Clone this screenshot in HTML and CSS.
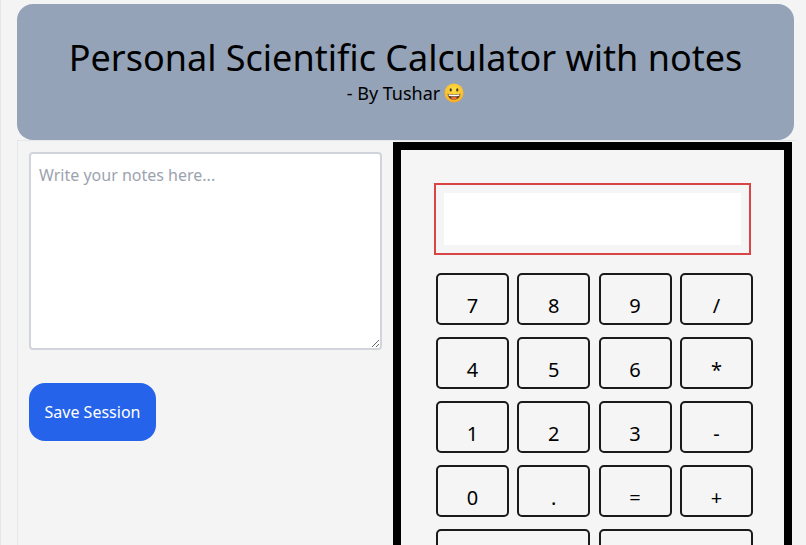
FILE: index.html
```html
<!DOCTYPE html>
<html lang="en">
<head>
<meta charset="utf-8">
<title>Personal Scientific Calculator with notes</title>
<link rel="stylesheet" href="styles.css">
</head>
<body>
<div class="page">
  <header class="banner">
    <h1 class="title">Personal Scientific Calculator with notes</h1>
    <p class="byline">- By Tushar <svg class="smiley" viewBox="0 0 22 22" aria-hidden="true"><defs><radialGradient id="f" cx="50%" cy="35%" r="65%"><stop offset="0" stop-color="#fde047"/><stop offset=".7" stop-color="#fbc02d"/><stop offset="1" stop-color="#f4a82a"/></radialGradient></defs><circle cx="11" cy="11" r="10.5" fill="url(#f)"/><ellipse cx="7.4" cy="7.6" rx="1.2" ry="1.8" fill="#40362a"/><ellipse cx="14.6" cy="7.6" rx="1.2" ry="1.8" fill="#40362a"/><path d="M4 11.8c4.500 1.200 9.500 1.200 14 0 0 3.800-3.100 6.400-7 6.400s-7-2.600-7-6.400z" fill="#5a3a22"/><path d="M5 12.300c4 .9 8 .9 12 0v1.600c-4 .8-8 .8-12 0z" fill="#fff"/><path d="M7.400 16.500c1-.9 2.200-1.300 3.600-1.300s2.600.4 3.600 1.300c-1 1-2.200 1.500-3.600 1.500s-2.600-.5-3.600-1.500z" fill="#ef6c3a"/></svg></p>
  </header>
  <main class="workspace">
    <section class="notes">
      <textarea class="notes-input" placeholder="Write your notes here..."></textarea>
      <button class="save">Save Session</button>
    </section>
    <section class="calc">
      <div class="display-frame"><div class="display"></div></div>
      <div class="keys">
        <button class="key">7</button><button class="key">8</button><button class="key">9</button><button class="key">/</button>
        <button class="key">4</button><button class="key">5</button><button class="key">6</button><button class="key">*</button>
        <button class="key">1</button><button class="key">2</button><button class="key">3</button><button class="key">-</button>
        <button class="key">0</button><button class="key">.</button><button class="key">=</button><button class="key">+</button>
        <button class="key wide"></button><button class="key wide"></button>
      </div>
    </section>
  </main>
</div>
</body>
</html>
```

FILE: styles.css
```css
* { box-sizing: border-box; }
html, body { margin: 0; height: 100%; overflow: hidden; }
body {
  background: #f4f4f5;
  font-family: "Noto Sans", sans-serif;
  color: #000;
}
.page {
  height: 100%;
  padding: 4px 12px 0 16px;
  border-left: 1px solid #e5e7eb;
}
.banner {
  height: 136px;
  background: #94a3b8;
  border-radius: 16px;
  padding-top: 32px;
  text-align: center;
}
.title {
  margin: 0;
  font-size: 36px;
  line-height: 44px;
  font-weight: 400;
}
.byline {
  margin: 1px 0 0;
  font-size: 18px;
  line-height: 24px;
  display: flex;
  justify-content: center;
  align-items: center;
  gap: 4px;
}
.smiley { width: 20px; height: 20px; }
.workspace {
  display: flex;
  height: 405px;
  margin-right: -2px;
  padding-top: 1px;
  border-left: 1px solid #e5e7eb;
  border-top: 1px solid #e5e7eb;
}
.notes {
  width: 375px;
  padding: 10px 11px 0 11px;
  flex: none;
}
.notes-input {
  display: block;
  width: 353px;
  height: 198px;
  padding: 9px 8px 8px;
  border: 2px solid #d1d5db;
  border-radius: 4px;
  background: #fff;
  font: 16px/24px "Noto Sans", sans-serif;
}
.notes-input::placeholder { color: #9ca3af; opacity: 1; }
.save {
  display: block;
  margin-top: 33px;
  width: 127px;
  height: 58px;
  border: 0;
  border-radius: 16px;
  background: #2563eb;
  color: #fff;
  font: 16px "Noto Sans", sans-serif;
}
.calc {
  width: 399px;
  flex: none;
  border: 8px solid #000;
  border-bottom: 0;
  background: #f5f5f5;
  padding: 33px 0 0 33px;
}
.display-frame {
  width: 317px;
  height: 72px;
  padding: 8px;
  border: 2px solid #d94444;
}
.display { height: 100%; background: #fff; }
.keys {
  margin-top: 18px;
  margin-left: 2px;
  display: grid;
  grid-template-columns: repeat(4, 73px);
  grid-auto-rows: 52px;
  column-gap: 8.3px;
  row-gap: 12px;
}
.key {
  border: 2px solid #1a1a1a;
  border-radius: 5px;
  background: transparent;
  color: #000;
  font: 20px/28px "Noto Sans", sans-serif;
  padding: 14px 0 0;
}
.wide { grid-column: span 2; }
```
